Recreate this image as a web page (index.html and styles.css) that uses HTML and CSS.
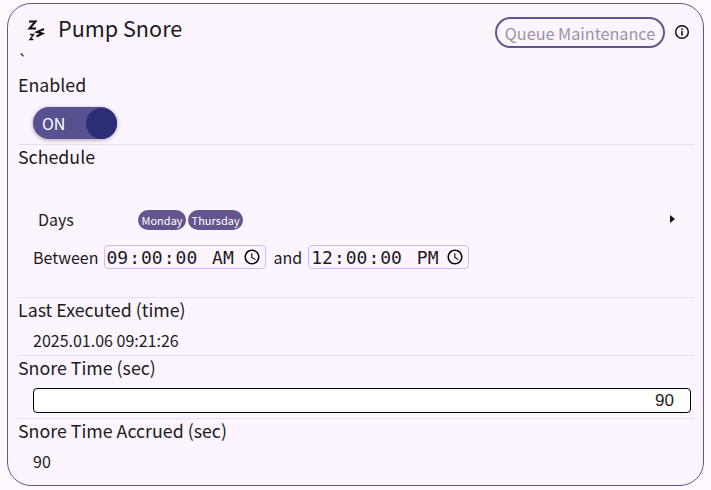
FILE: index.html
```html
<!DOCTYPE html>
<html lang="en">
<head>
    <meta charset="UTF-8">
    <meta name="viewport" content="width=device-width, initial-scale=1.0">
    <title>Pump Snore</title>
    <link rel="stylesheet" href="styles.css">
</head>
<body>
    <div class="card">
        <div class="card-header">
            <svg class="snore-icon" width="24" height="26" viewBox="0 0 24 26" fill="none" stroke="#111" stroke-width="2">
                <path d="M5 4.500h6.500L5.500 11.500h6.500"/>
                <path d="M20 12l-7 3 5.500 1.500-6 3"/>
                <path d="M6 17.500h3.500l-3.500 5h3.500" stroke-width="1.400"/>
            </svg>
            <h1 class="card-title">Pump Snore</h1>
            <button type="button" class="queue-btn" disabled>Queue Maintenance</button>
            <svg class="info-icon" width="16" height="16" viewBox="0 0 16 16" fill="none">
                <circle cx="8" cy="8" r="6.300" stroke="#111" stroke-width="1.500"/>
                <rect x="7.200" y="7" width="1.600" height="4.500" fill="#111"/>
                <rect x="7.200" y="4.300" width="1.600" height="1.600" fill="#111"/>
            </svg>
        </div>
        <div class="stray">`</div>

        <div class="row row-enabled">
            <label class="row-label">Enabled</label>
            <div class="toggle">
                <span class="toggle-text">ON</span>
                <span class="toggle-knob"></span>
            </div>
        </div>

        <div class="row row-schedule">
            <label class="row-label">Schedule</label>
            <div class="days">
                <span class="days-label">Days</span>
                <span class="chip">Monday</span>
                <span class="chip">Thursday</span>
                <span class="arrow"></span>
            </div>
            <div class="between">
                <span>Between</span>
                <input type="time" class="time-input" value="09:00:00" step="1">
                <span class="between-and">and</span>
                <input type="time" class="time-input time-end" value="12:00:00" step="1">
            </div>
        </div>

        <div class="row row-executed">
            <label class="row-label">Last Executed (time)</label>
            <div class="value">2025.01.06 09:21:26</div>
        </div>

        <div class="row row-time">
            <label class="row-label">Snore Time (sec)</label>
            <input type="text" class="num-input" value="90">
        </div>

        <div class="row row-accrued">
            <label class="row-label">Snore Time Accrued (sec)</label>
            <div class="value">90</div>
        </div>
    </div>
</body>
</html>
```

FILE: styles.css
```css
body {
    font-family: "Noto Sans CJK SC", sans-serif;
    background-color: #fff8ff;
    color: #1d1b20;
    margin: 0;
    padding: 3px 7px 3px 7px;
}

.card {
    background-color: #fcf4ff;
    border: 1px solid #65558f;
    border-radius: 24px;
    height: 483px;
    box-sizing: border-box;
    padding: 0 8px 0 10px;
}

.card-header {
    display: flex;
    align-items: flex-start;
    height: 48px;
    padding-left: 6px;
    padding-top: 13px;
    box-sizing: border-box;
}

.snore-icon {
    flex: none;
}

.card-title {
    font-size: 21.600px;
    font-weight: 400;
    margin: 0 0 0 10px;
    flex: 1;
    line-height: 22px;
}

.queue-btn {
    font-family: inherit;
    font-size: 16.200px;
    color: #9a95a0;
    background: transparent;
    border: 2px solid #65558f;
    border-radius: 16px;
    height: 31px;
    width: 170px;
    padding: 0;
    margin: 0 9px 0 0;
}

.info-icon {
    margin: 7px 5px 0 0;
}

.stray {
    font-size: 16px;
    line-height: 16px;
    height: 10px;
}

.row {
    border-bottom: 1px solid #e8def8;
}

.row-label {
    display: block;
    font-size: 17.800px;
    line-height: 23px;
    margin-bottom: 1px;
}

.row-enabled {
    padding-top: 11px;
    height: 83px;
    box-sizing: border-box;
}

.toggle {
    display: flex;
    align-items: center;
    justify-content: space-between;
    width: 84px;
    height: 32px;
    margin: 11px 0 0 15px;
    background-color: #58518f;
    border-radius: 16px;
    box-shadow: 0 1px 4px rgba(0, 0, 0, 0.35);
    color: #fff;
    box-sizing: border-box;
    padding: 0 0 0 9px;
}

.toggle-text {
    font-size: 16px;
}

.toggle-knob {
    width: 31px;
    height: 31px;
    border-radius: 50%;
    background-color: #2c2c77;
}

.row-schedule {
    height: 153px;
    box-sizing: border-box;
    padding-top: 0;
}

.days {
    display: flex;
    align-items: center;
    gap: 2px;
    margin-top: 39px;
    padding-left: 20px;
    height: 24px;
    padding-right: 20px;
}

.days-label {
    font-size: 16px;
    width: 98px;
    flex: none;
}

.chip {
    background-color: #65558f;
    color: #fff;
    font-size: 11px;
    line-height: 20px;
    height: 20px;
    padding: 0 3.500px;
    border-radius: 10px;
    margin-top: 2px;
}

.arrow {
    margin-left: auto;
    width: 0;
    height: 0;
    border-left: 5px solid #111;
    border-top: 4.500px solid transparent;
    border-bottom: 4.500px solid transparent;
}

.between {
    display: flex;
    align-items: center;
    gap: 5px;
    padding-left: 15px;
    margin-top: 14px;
    font-size: 16px;
}

.between-and {
    margin: 0 1px 0 3px;
}

.time-input {
    font-family: "DejaVu Sans Mono", monospace;
    font-size: 18px;
    color: #1d1b20;
    background: transparent;
    border: 1px solid #cbbcff;
    border-radius: 4px;
    height: 24px;
    width: 162px;
    box-sizing: border-box;
    padding: 0 0 0 1px;
}

.time-input::-webkit-datetime-edit-ampm-field {
    margin-left: 2px;
}

.time-input::-webkit-calendar-picker-indicator {
    margin-left: 0;
}

.time-end {
    width: 161px;
}

.row-executed {
    height: 58px;
    box-sizing: border-box;
}

.value {
    font-size: 16px;
    line-height: 20px;
    padding-left: 15px;
    margin-top: 9px;
}

.row-time {
    height: 63px;
    box-sizing: border-box;
}

.num-input {
    display: block;
    width: 658px;
    height: 25px;
    box-sizing: border-box;
    margin: 9px 0 0 15px;
    border: 1px solid #000;
    border-radius: 4px;
    background-color: #fff;
    text-align: right;
    font-family: "Liberation Sans", sans-serif;
    font-size: 17px;
    padding: 0 16px;
    color: #1d1b20;
}

.row-accrued {
    border-bottom: none;
}
```
